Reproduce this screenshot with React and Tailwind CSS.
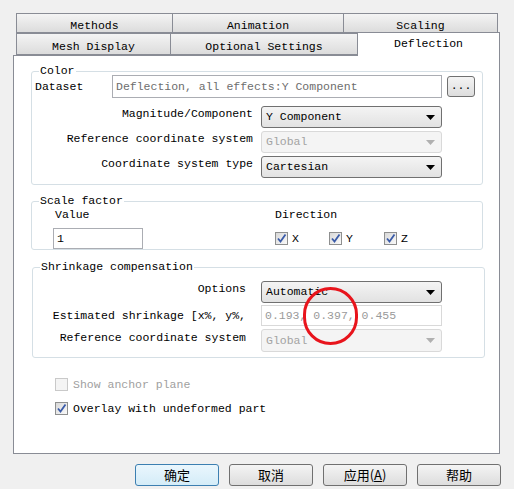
import React from 'react';

const mono = "font-['Liberation_Mono','Courier_New',Cousine,monospace] text-[11.5px] leading-[14px]";
const cjk = "font-['Noto_Sans_CJK_SC',sans-serif] text-[13px]";

const Tab = ({ label, className = '' }) => (
  <div
    className={`flex items-center justify-center border border-[#898c95] bg-linear-to-b from-[#f4f4f4] to-[#dcdcdc] pt-[5px] text-black ${className}`}
  >
    {label}
  </div>
);

const Select = ({ value, disabled = false, className = '' }) => (
  <div
    className={`flex items-center justify-between w-[181px] h-[22px] rounded-[3px] border pl-[4px] pr-[6px] ${
      disabled
        ? 'border-[#d9d9d9] bg-[#f4f4f4] text-[#a3a3a3]'
        : 'border-[#707070] bg-linear-to-b from-[#f4f4f4] to-[#e2e2e2] text-black'
    } ${className}`}
  >
    <span>{value}</span>
    <svg width="9" height="5" viewBox="0 0 9 5">
      <path d="M0 0h9L4.5 5z" fill={disabled ? '#b0b0b0' : '#000'} />
    </svg>
  </div>
);

const Check = ({ checked = false, disabled = false }) => (
  <span
    className={`flex items-center justify-center w-[13px] h-[13px] border ${
      disabled
        ? 'border-[#c9c9c9] bg-[#f4f4f4]'
        : 'border-[#8e8f8f] bg-linear-to-br from-[#d8d8d8] to-[#fafafa]'
    }`}
  >
    {checked && (
      <svg width="11" height="11" viewBox="0 0 11 11">
        <path d="M2 5.5 L4.5 8.5 L9.5 1.5" fill="none" stroke="#3a5ba8" strokeWidth="1.8" />
      </svg>
    )}
  </span>
);

const Group = ({ title, className = '', children }) => (
  <div className={`relative border border-[#d5dfe5] rounded-[3px] ${className}`}>
    <span className="absolute -top-[8px] left-[7px] bg-white px-[1px]">{title}</span>
    {children}
  </div>
);

const Button = ({ children, focused = false }) => (
  <div
    className={`flex items-center justify-center w-[84px] h-[22px] rounded-[3px] border ${cjk} ${
      focused
        ? 'border-[#3c7fb1] bg-linear-to-b from-[#eaf6fd] to-[#d4ecf8]'
        : 'border-[#707070] bg-linear-to-b from-[#f4f4f4] to-[#dddddd]'
    } text-black`}
  >
    {children}
  </div>
);

// label next to a combo box sits a little above the box's text
const SelectRow = ({ label, labelWidth, gap, children, className = '' }) => (
  <div className={`flex items-center ${className}`}>
    <div className={`${labelWidth} mb-[6px] text-right`}>{label}</div>
    <div className={gap}>{children}</div>
  </div>
);

export default function App() {
  return (
    <div className={`relative w-[514px] h-[489px] overflow-hidden bg-[#f0f0f0] pt-[13px] text-black ${mono}`}>
      {/* tab rows */}
      <div className="ml-[16px] flex h-[20px]">
        <Tab label="Methods" className="w-[157px]" />
        <Tab label="Animation" className="w-[172px] -ml-px" />
        <Tab label="Scaling" className="w-[155px] -ml-px" />
      </div>
      <div className="ml-[16px] flex h-[22px]">
        <Tab label="Mesh Display" className="w-[155px]" />
        <Tab label="Optional Settings" className="w-[188px] -ml-px" />
        <div className="relative z-10 -ml-px -mt-px flex h-[24px] w-[143px] items-start justify-center border border-b-0 border-[#898c95] bg-white pt-[4px]">
          Deflection
        </div>
      </div>

      {/* panel */}
      <div className="ml-[13px] w-[487px] h-[399px] border border-[#898c95] bg-white">
        <Group title="Color" className="ml-[17px] mt-[15px] w-[452px] h-[114px]">
          <div className="mt-[3px] flex h-[23px] items-center">
            <div className="w-[80px] pl-[3px]">Dataset</div>
            <div className="flex h-[23px] w-[330px] items-center border border-[#abadb3] pl-[3px] text-[#6d6d6d]">
              Deflection, all effects:Y Component
            </div>
            <div className="ml-[5px] flex h-[21px] w-[28px] items-center justify-center rounded-[3px] border border-[#707070] bg-linear-to-b from-[#f4f4f4] to-[#dddddd] pb-[2px]">
              ...
            </div>
          </div>
          <SelectRow label="Magnitude/Component" labelWidth="w-[221px]" gap="ml-[8px]" className="mt-[8px]">
            <Select value="Y Component" />
          </SelectRow>
          <SelectRow label="Reference coordinate system" labelWidth="w-[221px]" gap="ml-[8px]" className="mt-[3px]">
            <Select value="Global" disabled />
          </SelectRow>
          <SelectRow label="Coordinate system type" labelWidth="w-[221px]" gap="ml-[8px]" className="mt-[3px]">
            <Select value="Cartesian" />
          </SelectRow>
        </Group>

        <Group title="Scale factor" className="ml-[17px] mt-[16px] w-[452px] h-[49px]">
          <div className="flex">
            <div className="ml-[21px] w-[90px]">
              <div className="mt-[6px] pl-[2px]">Value</div>
              <div className="mt-[6px] flex h-[21px] w-[90px] items-center border border-[#abadb3] pl-[3px]">1</div>
            </div>
            <div className="ml-[132px]">
              <div className="mt-[6px]">Direction</div>
              <div className="mt-[6px] flex h-[21px] items-center">
                <div className="flex w-[54px] items-center gap-[4px]"><Check checked />X</div>
                <div className="flex w-[55px] items-center gap-[4px]"><Check checked />Y</div>
                <div className="flex items-center gap-[4px]"><Check checked />Z</div>
              </div>
            </div>
          </div>
        </Group>

        <Group title="Shrinkage compensation" className="ml-[18px] mt-[17px] w-[453px] h-[91px]">
          <SelectRow label="Options" labelWidth="w-[213px]" gap="ml-[15px]" className="mt-[13px]">
            <Select value="Automatic" />
          </SelectRow>
          <div className="mt-[2px] flex items-center">
            <div className="w-[213px] overflow-hidden whitespace-nowrap text-right">Estimated shrinkage [x%, y%,</div>
            <div className="ml-[15px] flex h-[21px] w-[181px] items-center border border-[#d9d9d9] pl-[3px] text-[#9a9a9a]">
              0.193, 0.397, 0.455
            </div>
          </div>
          <SelectRow label="Reference coordinate system" labelWidth="w-[213px]" gap="ml-[15px]" className="mt-[3px]">
            <Select value="Global" disabled className="h-[23px]" />
          </SelectRow>
        </Group>

        <div className="ml-[41px] mt-[20px] flex h-[13px] items-center gap-[5px] text-[#a0a0a0]">
          <Check disabled />
          Show anchor plane
        </div>
        <div className="ml-[41px] mt-[11px] flex h-[13px] items-center gap-[5px]">
          <Check checked />
          Overlay with undeformed part
        </div>
      </div>

      {/* dialog buttons */}
      <div className="ml-[135px] mt-[10px] flex gap-[10px]">
        <Button focused>确定</Button>
        <Button>取消</Button>
        <Button>
          应用(<span className="underline">A</span>)
        </Button>
        <Button>帮助</Button>
      </div>

      {/* annotation circle */}
      <div className="absolute left-[303px] top-[287px] h-[58px] w-[55px] rounded-full border-[3px] border-[#e8141c]" />
    </div>
  );
}
